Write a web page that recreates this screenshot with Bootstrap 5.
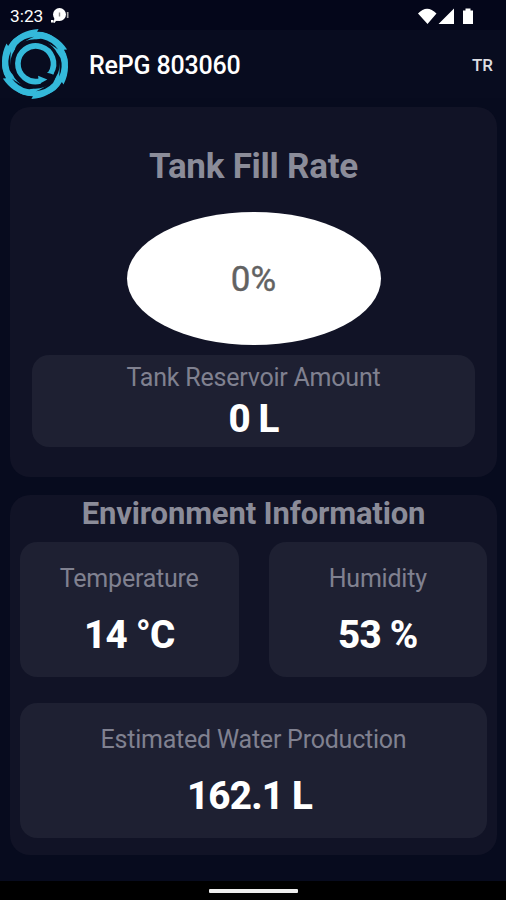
<!DOCTYPE html>
<html lang="en">
<head>
<meta charset="utf-8">
<meta name="viewport" content="width=device-width, initial-scale=1">
<title>RePG 803060</title>
<link href="https://cdn.jsdelivr.net/npm/bootstrap@5.3.0/dist/css/bootstrap.min.css" rel="stylesheet">
<style>
body{background:#070b1e;color:#fff;font-family:Roboto,sans-serif;height:900px;overflow:hidden}
.status-strip{height:30px;background:#04061a;padding:1px 31px 0 10px;font-size:17.3px;line-height:30px}
.app-head{height:68px;padding:0 13px 0 0;background:#080c1f}
.app-name{font-size:25px;font-weight:500;line-height:30px;margin-left:19px;padding-top:3px;letter-spacing:-.18px}
.lang{font-size:17px;font-weight:500;color:#dcdde2;padding-top:3px}
.panel{background:#111326;border-radius:20px;margin:0 9px 0 10px}
.panel-tank{margin-top:9px;height:370px;padding:39px 22px 0}
.panel-env{margin-top:18px;height:360px;padding:0 10px}
.tile{background:#1e2032;border-radius:17px}
.tile-tank{height:92px;margin-top:10px}
.tile-env{height:135px;padding-top:22px}
.tile-wide{grid-column:1 / -1}
.tile-wide .figure-value{padding-right:8px}
.env-grid{column-gap:30px;row-gap:26px;grid-template-columns:1fr 1fr}
.heading-tank{font-size:35px;font-weight:700;line-height:42px;color:#8b8c99;letter-spacing:-.25px}
.heading-env{font-size:31px;font-weight:700;line-height:38px;height:47px;color:#8b8c99;letter-spacing:-.15px}
.caption{font-size:25px;line-height:29px;color:#808190;letter-spacing:-.22px}
.figure-value{font-size:38.500px;font-weight:800;line-height:46px;letter-spacing:-.8px}
.tile-tank .caption{padding-top:8px}
.tile-tank .figure-value{margin-top:4px}
.tile-env .caption{height:48px}
.gauge{width:254px;height:133px;border-radius:50%;margin-top:24px;padding-top:4px;color:#626262;font-size:35px;-webkit-text-stroke:.4px #626262}
.nav-strip{height:19px;background:#000}
.home-pill{width:89px;height:4px;background:#eee;border-radius:1px;margin-top:1px}
</style>
<script src="https://cdn.jsdelivr.net/npm/bootstrap@5.3.0/dist/js/bootstrap.bundle.min.js"></script>
</head>
<body class="d-flex flex-column">
<div class="status-strip d-flex align-items-center justify-content-between flex-shrink-0">
  <div class="d-flex align-items-center">
    <span>3:23</span>
    <svg class="ms-2" width="19" height="16" viewBox="0 0 19 16"><circle cx="8.500" cy="6.500" r="6.500" fill="#fff"/><path d="M0 14.500V12h2.500v2.500zM2.500 14.500L4 8l5 4.500-4 .5-1.500 2z" fill="#fff"/><path d="M15.800 4h1.700v6h-1.700z" fill="#aaa"/><path d="M8.500 4.500v4" stroke="#888" stroke-width="1.400"/></svg>
  </div>
  <svg width="58" height="18" viewBox="0 0 58 18" fill="#fff"><path d="M1 6.500Q10-3 19.500 6.500L10.500 17zM21.500 17L37 1.500V17zM46 3.500h2.500v-2h5v2H56V17H46z"/></svg>
</div>
<header class="app-head d-flex align-items-center flex-shrink-0">
  <svg width="70" height="70" viewBox="1 0 68 68" fill="none" stroke="#34b9da">
    <circle cx="35" cy="34" r="27.500" stroke-width="7"/>
    <g fill="#34b9da" stroke="none">
      <path id="blade" d="M11 14Q21 1 38.500 0L37 2.700Q47 2.500 54 8.500L49 8L52 12L35 9Q21 8 11 20Z"/>
      <use href="#blade" transform="rotate(60 35 34)"/><use href="#blade" transform="rotate(120 35 34)"/><use href="#blade" transform="rotate(180 35 34)"/><use href="#blade" transform="rotate(240 35 34)"/><use href="#blade" transform="rotate(300 35 34)"/>
    </g>
    <g fill="#080c1f" stroke="none">
      <path id="slit" d="M17.500 15.500Q24 8.500 34 7.500Q26 11 21.500 15Q17.500 19 15 23Q15 18.500 17.500 15.500Z"/>
      <use href="#slit" transform="rotate(60 35 34)"/><use href="#slit" transform="rotate(120 35 34)"/><use href="#slit" transform="rotate(180 35 34)"/><use href="#slit" transform="rotate(240 35 34)"/><use href="#slit" transform="rotate(300 35 34)"/>
    </g>
    <path d="M50.300 43A17.300 17.300 0 1 0 40 50.500" stroke-width="5.500"/>
    <path d="M38 45.500l9 3.500-8 4.500zM46.500 42.500l6.500-3.500v5z" fill="#34b9da" stroke="none"/>
  </svg>
  <span class="app-name">RePG 803060</span>
  <span class="lang ms-auto">TR</span>
</header>
<main class="flex-grow-1">
  <section class="panel panel-tank text-center">
    <h1 class="heading-tank mb-0">Tank Fill Rate</h1>
    <div class="gauge bg-white mx-auto d-flex align-items-center justify-content-center">0%</div>
    <div class="tile tile-tank">
      <div class="caption">Tank Reservoir Amount</div>
      <div class="figure-value">0 L</div>
    </div>
  </section>
  <section class="panel panel-env text-center">
    <h2 class="heading-env mb-0">Environment Information</h2>
    <div class="env-grid d-grid">
      <div class="tile tile-env"><div class="caption">Temperature</div><div class="figure-value">14 °C</div></div>
      <div class="tile tile-env"><div class="caption">Humidity</div><div class="figure-value">53 %</div></div>
      <div class="tile tile-env tile-wide"><div class="caption">Estimated Water Production</div><div class="figure-value">162.1 L</div></div>
    </div>
  </section>
</main>
<footer class="nav-strip d-flex align-items-center justify-content-center flex-shrink-0"><div class="home-pill"></div></footer>
</body>
</html>
